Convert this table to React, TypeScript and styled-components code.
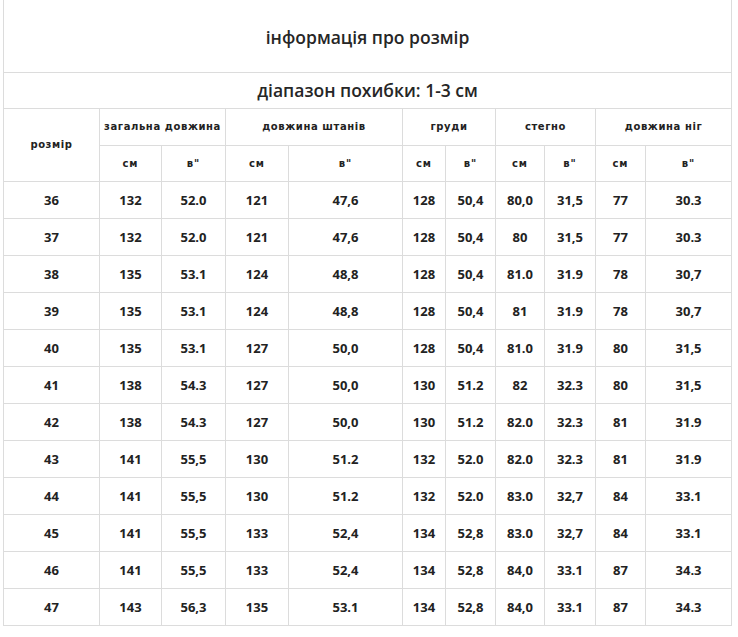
import React from "react";
import styled, { createGlobalStyle } from "styled-components";

type Row = [string, string, string, string, string, string, string, string, string, string, string];

const rows: Row[] = [
  ["36", "132", "52.0", "121", "47,6", "128", "50,4", "80,0", "31,5", "77", "30.3"],
  ["37", "132", "52.0", "121", "47,6", "128", "50,4", "80", "31,5", "77", "30.3"],
  ["38", "135", "53.1", "124", "48,8", "128", "50,4", "81.0", "31.9", "78", "30,7"],
  ["39", "135", "53.1", "124", "48,8", "128", "50,4", "81", "31.9", "78", "30,7"],
  ["40", "135", "53.1", "127", "50,0", "128", "50,4", "81.0", "31.9", "80", "31,5"],
  ["41", "138", "54.3", "127", "50,0", "130", "51.2", "82", "32.3", "80", "31,5"],
  ["42", "138", "54.3", "127", "50,0", "130", "51.2", "82.0", "32.3", "81", "31.9"],
  ["43", "141", "55,5", "130", "51.2", "132", "52.0", "82.0", "32.3", "81", "31.9"],
  ["44", "141", "55,5", "130", "51.2", "132", "52.0", "83.0", "32,7", "84", "33.1"],
  ["45", "141", "55,5", "133", "52,4", "134", "52,8", "83.0", "32,7", "84", "33.1"],
  ["46", "141", "55,5", "133", "52,4", "134", "52,8", "84,0", "33.1", "87", "34.3"],
  ["47", "143", "56,3", "135", "53.1", "134", "52,8", "84,0", "33.1", "87", "34.3"],
];

const colWidths = [96, 62, 64, 63, 114, 43, 50, 49, 51, 50, 86];

const groups = ["загальна довжина", "довжина штанів", "груди", "стегно", "довжина ніг"];

const GlobalStyle = createGlobalStyle`
  body {
    margin: 0;
    background: #ffffff;
    font-family: "Open Sans", "Noto Sans", sans-serif;
    color: #2b2b2b;
  }
`;

const Wrapper = styled.div`
  padding: 0 0 0 3px;
`;

const SizeTable = styled.table`
  width: 728px;
  table-layout: fixed;
  border-collapse: collapse;
  text-align: center;
`;

const Cell = styled.td<{ $h: number }>`
  height: ${(p) => p.$h}px;
  padding: 0;
  border: 1px solid #dcdcdc;
  box-sizing: border-box;
  vertical-align: middle;
`;

const TitleCell = styled(Cell)`
  border-top: none;
  font-size: 17.5px;
  font-weight: 600;
  color: #262626;
  padding-top: 2px;
`;

const SubTitleCell = styled(Cell)`
  font-size: 17.5px;
  font-weight: 600;
  color: #262626;
`;

const HeadCell = styled(Cell)`
  font-family: "DejaVu Sans", Verdana, sans-serif;
  font-weight: bold;
  font-size: 10px;
  letter-spacing: 0.6px;
  color: #222222;
`;

const UnitCell = styled(HeadCell)`
  letter-spacing: 1px;
`;

const DataCell = styled(Cell)`
  font-size: 13px;
  font-weight: 700;
  color: #222222;
`;

export default function App() {
  return (
    <>
      <GlobalStyle />
      <Wrapper>
        <SizeTable>
          <colgroup>
            {colWidths.map((w, i) => (
              <col key={i} style={{ width: w }} />
            ))}
          </colgroup>
          <tbody>
            <tr>
              <TitleCell as="th" colSpan={11} $h={72}>
                інформація про розмір
              </TitleCell>
            </tr>
            <tr>
              <SubTitleCell as="th" colSpan={11} $h={36}>
                діапазон похибки: 1-3 см
              </SubTitleCell>
            </tr>
            <tr>
              <HeadCell as="th" rowSpan={2} $h={37}>
                розмір
              </HeadCell>
              {groups.map((g) => (
                <HeadCell as="th" key={g} colSpan={2} $h={37}>
                  {g}
                </HeadCell>
              ))}
            </tr>
            <tr>
              {groups.map((g) => (
                <React.Fragment key={g}>
                  <UnitCell as="th" $h={36}>см</UnitCell>
                  <UnitCell as="th" $h={36}>в"</UnitCell>
                </React.Fragment>
              ))}
            </tr>
            {rows.map((r) => (
              <tr key={r[0]}>
                {r.map((v, i) => (
                  <DataCell key={i} $h={37}>
                    {v}
                  </DataCell>
                ))}
              </tr>
            ))}
          </tbody>
        </SizeTable>
      </Wrapper>
    </>
  );
}
